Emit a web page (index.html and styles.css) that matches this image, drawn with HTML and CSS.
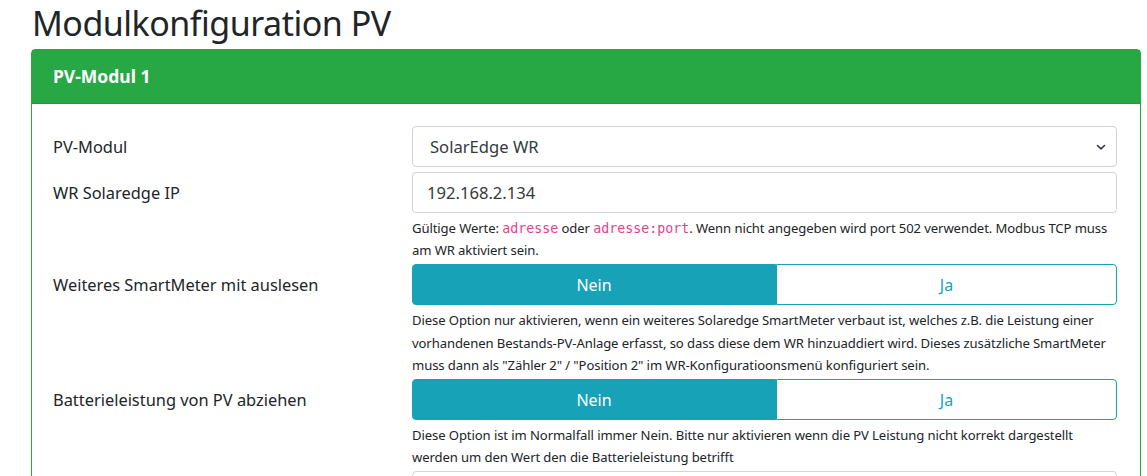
FILE: index.html
```html
<!DOCTYPE html>
<html lang="de">
<head>
<meta charset="utf-8">
<title>Modulkonfiguration PV</title>
<link rel="stylesheet" href="styles.css">
</head>
<body>
<div class="container">
  <h1 class="title">Modulkonfiguration PV</h1>
  <div class="card">
    <div class="card-header">PV-Modul 1</div>
    <div class="card-body">
      <div class="row row-first">
        <label class="label">PV-Modul</label>
        <div class="ctrl">
          <div class="select">
            <span>SolarEdge WR</span>
            <svg class="chev" width="10" height="8" viewBox="0 0 10 8"><path d="M1.5 2.5 L5 5.8 L8.5 2.5" fill="none" stroke="#343a40" stroke-width="1.6" stroke-linecap="round" stroke-linejoin="round"/></svg>
          </div>
        </div>
      </div>
      <div class="row">
        <label class="label">WR Solaredge IP</label>
        <div class="ctrl">
          <div class="input">192.168.2.134</div>
          <p class="help">Gültige Werte: <code>adresse</code> oder <code>adresse:port</code>. Wenn nicht angegeben wird port 502 verwendet. Modbus TCP muss am WR aktiviert sein.</p>
        </div>
      </div>
      <div class="row">
        <label class="label">Weiteres SmartMeter mit auslesen</label>
        <div class="ctrl">
          <div class="btn-group">
            <div class="btn btn-active">Nein</div>
            <div class="btn btn-outline">Ja</div>
          </div>
          <p class="help">Diese Option nur aktivieren, wenn ein weiteres Solaredge SmartMeter verbaut ist, welches z.B. die Leistung einer vorhandenen Bestands-PV-Anlage erfasst, so dass diese dem WR hinzuaddiert wird. Dieses zusätzliche SmartMeter muss dann als "Zähler 2" / "Position 2" im WR-Konfiguratioonsmenü konfiguriert sein.</p>
        </div>
      </div>
      <div class="row">
        <label class="label">Batterieleistung von PV abziehen</label>
        <div class="ctrl">
          <div class="btn-group">
            <div class="btn btn-active">Nein</div>
            <div class="btn btn-outline">Ja</div>
          </div>
          <p class="help">Diese Option ist im Normalfall immer Nein. Bitte nur aktivieren wenn die PV Leistung nicht korrekt dargestellt werden um den Wert den die Batterieleistung betrifft</p>
        </div>
      </div>
      <div class="row">
        <label class="label">&nbsp;</label>
        <div class="ctrl">
          <div class="input">&nbsp;</div>
        </div>
      </div>
    </div>
  </div>
</div>
</body>
</html>
```
FILE: styles.css
```css
html, body {
  margin: 0;
  padding: 0;
  background: #fff;
  overflow: hidden;
}
body {
  font-family: "Noto Sans", "Open Sans", sans-serif;
  color: #212529;
}
.container {
  padding: 0 6px 0 31px;
}
.title {
  margin: 0;
  padding-top: 0;
  font-weight: 400;
  font-size: 34px;
  line-height: 46px;
  letter-spacing: -0.5px;
  height: 49px;
  padding-left: 1px;
}
.card {
  border: 1px solid #28a745;
  border-radius: 4px 4px 0 0;
  width: 1108px;
}
.card-header {
  background: #28a745;
  color: #fff;
  font-weight: 700;
  font-size: 17.5px;
  height: 53px;
  line-height: 53px;
  padding-left: 21px;
  border-bottom: 1px solid #24963e;
}
.card-body {
  padding: 22px 23px 0 21px;
}
.row {
  display: grid;
  grid-template-columns: 359px 705px;
  margin-bottom: 3px;
}
.row-first {
  margin-bottom: 5px;
}
.label {
  font-size: 16.4px;
  height: 41px;
  line-height: 42px;
}
.select, .input {
  height: 41px;
  box-sizing: border-box;
  border: 1px solid #ced4da;
  border-radius: 4px;
  display: flex;
  align-items: center;
  font-size: 16.6px;
  color: #343a40;
}
.select {
  justify-content: space-between;
  padding: 0 10px 0 17px;
}
.input {
  padding: 0 14px;
}
.chev {
  display: block;
}
.help {
  margin: 4px 0 0;
  font-size: 13.1px;
  line-height: 22.2px;
  letter-spacing: -0.1px;
  color: #212529;
}
code {
  font-family: "DejaVu Sans Mono", "Liberation Mono", monospace;
  font-size: 13.3px;
  line-height: 1;
  color: #e83e8c;
  letter-spacing: 0;
}
.btn-group {
  display: flex;
  height: 41px;
}
.btn {
  box-sizing: border-box;
  display: flex;
  align-items: center;
  justify-content: center;
  font-size: 16px;
  border: 1px solid #17a2b8;
}
.btn-active {
  width: 364px;
  background: #17a2b8;
  color: #fff;
  border-radius: 4px 0 0 4px;
}
.btn-outline {
  flex: 1;
  background: #fff;
  color: #17a2b8;
  border-radius: 0 4px 4px 0;
}
```
